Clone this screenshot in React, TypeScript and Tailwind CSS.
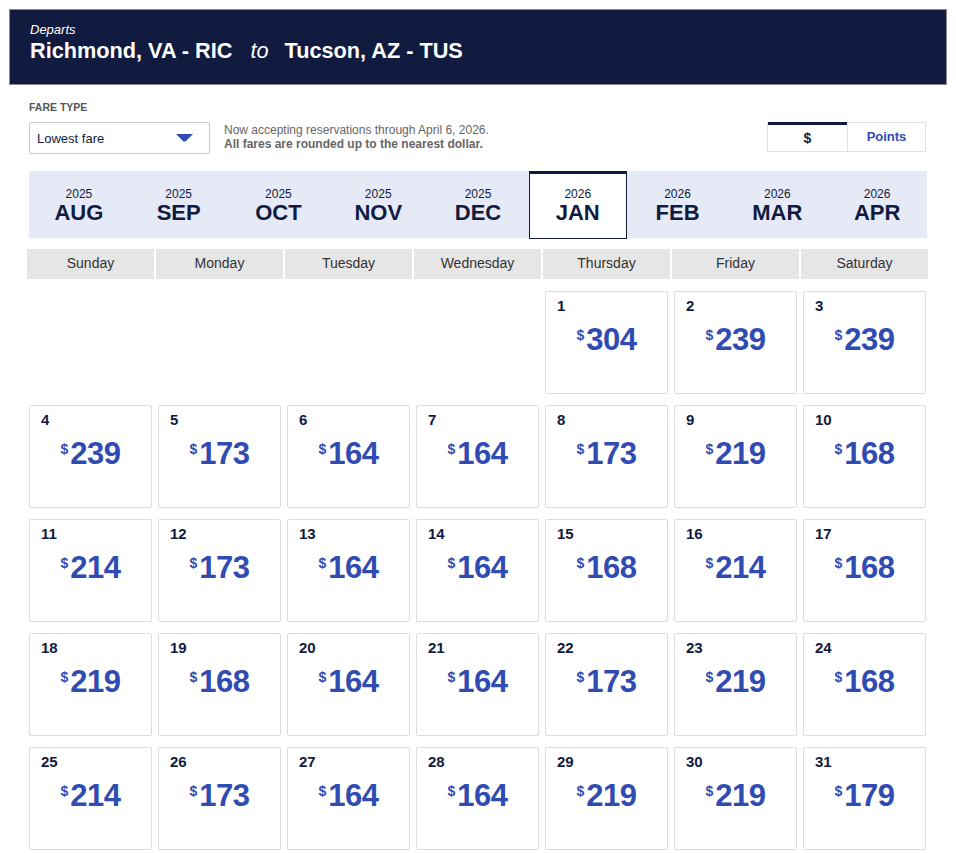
import React from "react";

type Day = { d: number; p: number } | null;

const MONTHS = [
  { y: "2025", m: "AUG" },
  { y: "2025", m: "SEP" },
  { y: "2025", m: "OCT" },
  { y: "2025", m: "NOV" },
  { y: "2025", m: "DEC" },
  { y: "2026", m: "JAN", active: true },
  { y: "2026", m: "FEB" },
  { y: "2026", m: "MAR" },
  { y: "2026", m: "APR" },
];

const WEEKDAYS = ["Sunday", "Monday", "Tuesday", "Wednesday", "Thursday", "Friday", "Saturday"];

const PRICES = [
  304, 239, 239, 239, 173, 164, 164, 173, 219, 168, 214, 173, 164, 164, 168, 214, 168, 219, 168,
  164, 164, 173, 219, 168, 214, 173, 164, 164, 219, 219, 179,
];

const DAYS: Day[] = [null, null, null, null, ...PRICES.map((p, i) => ({ d: i + 1, p }))];

function DayCell({ day }: { day: Day }) {
  if (!day) return <div className="h-[103px]" />;
  return (
    <div className="h-[103px] border border-[#dcdcdc] rounded-[2px] bg-white flex flex-col">
      <div className="pl-[11px] pt-[6px] text-[15px] leading-none font-bold text-[#111b40]">{day.d}</div>
      <div className="mt-[11px] flex justify-center items-start text-[#304cb2] font-bold">
        <span className="mt-[4px] mr-[2px] text-[14px] leading-none">$</span>
        <span className="text-[31px] leading-none tracking-[-0.5px]">{day.p}</span>
      </div>
    </div>
  );
}

export default function App() {
  return (
    <div className="w-[956px] h-[853px] bg-white font-['Liberation_Sans',Arial,sans-serif] overflow-hidden">
      {/* Header */}
      <div className="mx-[9px] mt-[9px] h-[76px] bg-[#111b40] border border-[#8a8a8a] pl-[20px] pt-[12px] text-white">
        <div className="text-[13px] leading-[15px] italic">Departs</div>
        <div className="mt-[4px] text-[21.7px] leading-[20px] font-bold whitespace-nowrap">
          Richmond, VA - RIC<span className="ml-[18px] mr-[16px] font-normal italic">to</span>Tucson, AZ - TUS
        </div>
      </div>

      {/* Fare type */}
      <div className="pl-[29px] pr-[30px]">
        <div className="mt-[16px] text-[10.5px] leading-[13px] font-bold text-[#555]">FARE TYPE</div>
        <div className="mt-[8px] flex items-start">
          <div className="w-[181px] h-[32px] border border-[#c8c8c8] rounded-[2px] flex items-center justify-between pl-[7px] pr-[16px]">
            <span className="text-[13px] text-[#111b40] mt-px">Lowest fare</span>
            <svg width="17" height="8" viewBox="0 0 17 8">
              <path d="M0 0 H17 L9.5 7.5 H7.5 Z" fill="#304cb2" />
            </svg>
          </div>
          <div className="ml-[14px] pt-[1px] text-[12px] leading-[14px] text-[#666]">
            <div>Now accepting reservations through April 6, 2026.</div>
            <div className="font-bold">All fares are rounded up to the nearest dollar.</div>
          </div>
          <div className="ml-auto flex h-[30px] border border-[#e2e2e2]">
            <div className="w-[79px] border-t-[3px] border-[#111b40] flex items-center justify-center text-[14px] font-bold text-[#111b40] -mt-px">
              $
            </div>
            <div className="w-[78px] border-l border-[#e2e2e2] flex items-center justify-center text-[13px] font-bold text-[#304cb2]">
              Points
            </div>
          </div>
        </div>
      </div>

      {/* Months */}
      <div className="ml-[29px] mt-[17px] w-[898px] h-[67px] bg-[#e6e9f6] grid grid-cols-9">
        {MONTHS.map((m) => (
          <div
            key={m.m}
            className={
              m.active
                ? "h-[68px] mx-[1px] bg-white border border-[#111b40] border-t-[3px] flex flex-col items-center pt-[14px] text-[#111b40]"
                : "flex flex-col items-center pt-[17px] text-[#111b40]"
            }
          >
            <div className="text-[12px] leading-none">{m.y}</div>
            <div className="mt-[2px] text-[22px] leading-none font-bold">{m.m}</div>
          </div>
        ))}
      </div>

      {/* Weekdays */}
      <div className="ml-[27px] mt-[11px] w-[901px] grid grid-cols-7 gap-[2px]">
        {WEEKDAYS.map((w) => (
          <div key={w} className="h-[30px] bg-[#e6e6e7] flex items-center justify-center text-[14px] text-[#333]">
            <span className="-mt-px">{w}</span>
          </div>
        ))}
      </div>

      {/* Calendar */}
      <div className="ml-[29px] mt-[12px] w-[897px] grid grid-cols-7 gap-x-[6px] gap-y-[11px]">
        {DAYS.map((d, i) => (
          <DayCell key={i} day={d} />
        ))}
      </div>
    </div>
  );
}
